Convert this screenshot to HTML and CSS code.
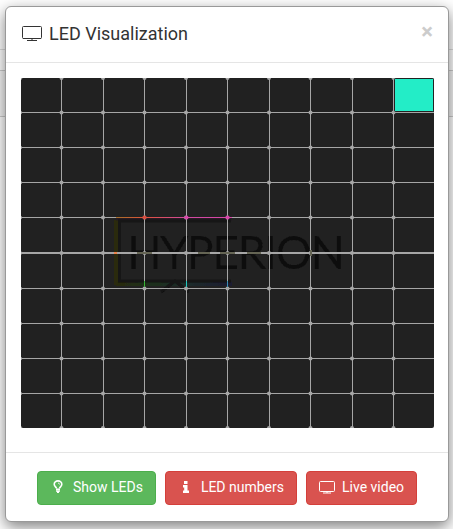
FILE: index.html
```
<!DOCTYPE html>
<html lang="en">
<head>
<meta charset="utf-8">
<meta name="viewport" content="width=device-width, initial-scale=1">
<title>LED Visualization</title>
<link rel="stylesheet" href="styles.css">
</head>
<body>
<div class="backdrop" aria-hidden="true">
  <div class="backdrop-bar"></div>
  <div class="backdrop-panel"></div>
</div>
<main class="modal" role="dialog" aria-labelledby="modal-title">
  <header class="modal-header">
    <h1 class="modal-title" id="modal-title">
      <svg class="title-icon" viewBox="0 0 20 16" fill="none" stroke="currentColor" aria-hidden="true"><rect x=".5" y=".5" width="19" height="12" rx="1"/><path d="M1 12.500h18M10 13v2"/><path d="M5 14.500h10"/></svg>
      LED Visualization
    </h1>
    <button class="close" type="button" aria-label="Close">×</button>
  </header>
  <section class="modal-body">
    <svg class="leds" viewBox="0 0 413 350" role="img" aria-label="LED layout">
      <defs>
        <linearGradient id="top-glow"><stop offset="0" stop-color="#a5702a"/><stop offset=".25" stop-color="#e0513a"/><stop offset=".6" stop-color="#d04aa0"/><stop offset="1" stop-color="#d846aa"/></linearGradient>
        <linearGradient id="bottom-glow"><stop offset="0" stop-color="#292b0e"/><stop offset=".3" stop-color="#1b2f1b"/><stop offset=".65" stop-color="#1a292b"/><stop offset="1" stop-color="#1d1b30"/></linearGradient>
        <filter id="soft" x="-10%" y="-10%" width="120%" height="120%"><feGaussianBlur stdDeviation=".6"/></filter>
      </defs>
      <rect width="413" height="350" rx="2" fill="#212121"/>
      <g fill="none" filter="url(#soft)">
        <path d="M95 142v65" stroke="#292b0c" stroke-width="4"/>
        <rect x="95" y="204" width="116" height="4" fill="url(#bottom-glow)"/>
        <path d="M95 141h116" stroke="#271a22" stroke-width="3"/>
        <path d="M210 143H98.500V203H210M140 214l14-11 14 11" stroke="#131313" stroke-width="3"/>
      </g>
      <text class="logo-text" x="107" y="190" filter="url(#soft)">HYPERION</text>
      <g stroke="#a6a6a6" shape-rendering="crispEdges">
        <path d="M40.500 0v350M82.500 0v350M123.500 0v350M165.500 0v350M206.500 0v350M248.500 0v350M289.500 0v350M331.500 0v350M372.500 0v350"/>
        <path d="M0 34.500h413M0 69.500h413M0 104.500h413M0 139.500h413M0 210.500h413M0 245.500h413M0 280.500h413M0 315.500h413"/>
        <path d="M0 175h413" stroke-width="2"/>
      </g>
      <g stroke="#a6a6a6" stroke-width="4" stroke-linecap="round" stroke-dasharray="0 41.500" fill="none">
        <path d="M-1 0h415M-1 34.500h415M-1 69.500h415M-1 104.500h415M-1 139.500h415M-1 175h415M-1 210.500h415M-1 245.500h415M-1 280.500h415M-1 315.500h415M-1 350h415"/>
      </g>
      <rect x="95" y="139" width="116" height="1" fill="url(#top-glow)" shape-rendering="crispEdges"/>
      <g fill="#656554"><path d="M116 174h15v2h-15zM177 174h12v2h-12zM199 174h15v2h-15zM226 174h14v2h-14zM289 172h2v6h-2z"/></g>
      <path d="M93 174h3v2h-3z" fill="#ed824d"/>
      <circle cx="123.500" cy="139.500" r="2" fill="#d94c40"/>
      <circle cx="165.500" cy="139.500" r="2" fill="#d846aa"/><circle cx="206.500" cy="139.500" r="2" fill="#d846aa"/>
      <path d="M123 203h1v6h-1z" fill="#36b336"/><path d="M165 203h1v6h-1z" fill="#20c7bd"/><path d="M206 203h1v6h-1z" fill="#398cb5"/>
      <rect x="373.500" y=".5" width="39" height="33" rx="1" fill="#23edc7" stroke="#222"/>
    </svg>
  </section>
  <footer class="modal-footer">
    <button class="btn btn-success" type="button">
      <svg class="icon-small" viewBox="0 0 12 14" fill="none" stroke="currentColor" aria-hidden="true"><path d="M4.500 8.500C4.500 7 2.200 6.500 2.200 4.200a3.800 3.300 0 0 1 7.600 0C9.800 6.500 7.500 7 7.500 8.500" stroke-width="1.600"/><path d="M4 9.200h4M4 10.900h4M5 12.300h2" stroke-width="1.500"/><path d="M6 3q1.500 0 1.500 1.500" stroke-width=".8"/></svg>
      Show LEDs
    </button>
    <button class="btn btn-danger" type="button">
      <svg class="icon-small" viewBox="0 0 12 14" fill="currentColor" aria-hidden="true"><path d="M4 1h3.500v3H4zM3 5h4.500v5.500H9V13H3v-2.500h1.200V7.500H3z"/></svg>
      LED numbers
    </button>
    <button class="btn btn-danger" type="button">
      <svg class="icon-screen" viewBox="0 0 16 13" fill="none" stroke="currentColor" aria-hidden="true"><rect x=".5" y=".5" width="15" height="10" rx="1"/><path d="M8 10v2M4 12h8"/></svg>
      Live video
    </button>
  </footer>
</main>
</body>
</html>
```
FILE: styles.css
```
* { box-sizing: border-box; }
body {
  margin: 0;
  background: #fff;
  color: #333;
  font-family: Roboto, "Liberation Sans", sans-serif;
  font-size: 14px;
  line-height: 20px;
}
.backdrop { position: absolute; inset: 0; z-index: -1; overflow: hidden; }
.backdrop-bar { height: 50px; border-bottom: 1px solid #ddd; }
.backdrop-panel { height: 47px; margin-top: 20px; border: solid #ccc; border-width: 1px 0; background: #f5f5f5; }
.modal {
  margin: 6px 4px 8px 5px;
  background: #fff;
  border: 1px solid #999;
  border-radius: 6px;
  box-shadow: 0 5px 15px rgba(0, 0, 0, .5);
}
.modal-header {
  display: flex;
  align-items: center;
  justify-content: space-between;
  height: 56px;
  padding: 0 15px 2px 16px;
  border-bottom: 1px solid #e5e5e5;
}
.modal-title {
  display: flex;
  align-items: center;
  gap: 7px;
  margin: 0;
  font-size: 18px;
  font-weight: 400;
}
.title-icon { width: 20px; height: 16px; }
.close {
  align-self: flex-start;
  margin-top: 15px;
  padding: 0;
  border: 0;
  background: none;
  color: #ccc;
  font: bold 22px/20px Roboto, sans-serif;
}
.modal-body { padding: 15px 14px 24px 15px; }
.leds { display: block; width: 100%; height: auto; }
.logo-text { font: 300 44px Lato, sans-serif; fill: #111; stroke: #111; stroke-width: 2px; }
.modal-footer {
  display: flex;
  justify-content: center;
  gap: 9px;
  padding: 18px 15px 16px;
  border-top: 1px solid #e5e5e5;
}
.btn {
  display: flex;
  align-items: center;
  gap: 7px;
  height: 34px;
  padding: 0 12px 2px;
  border: 1px solid;
  border-radius: 4px;
  color: #fff;
  font: 400 14px/20px Roboto, sans-serif;
}
.btn-success { background: #5cb85c; border-color: #4cae4c; }
.btn-danger { background: #d9534f; border-color: #d43f3a; }
.icon-small { width: 16px; height: 14px; }
.icon-screen { width: 16px; height: 13px; }
```
